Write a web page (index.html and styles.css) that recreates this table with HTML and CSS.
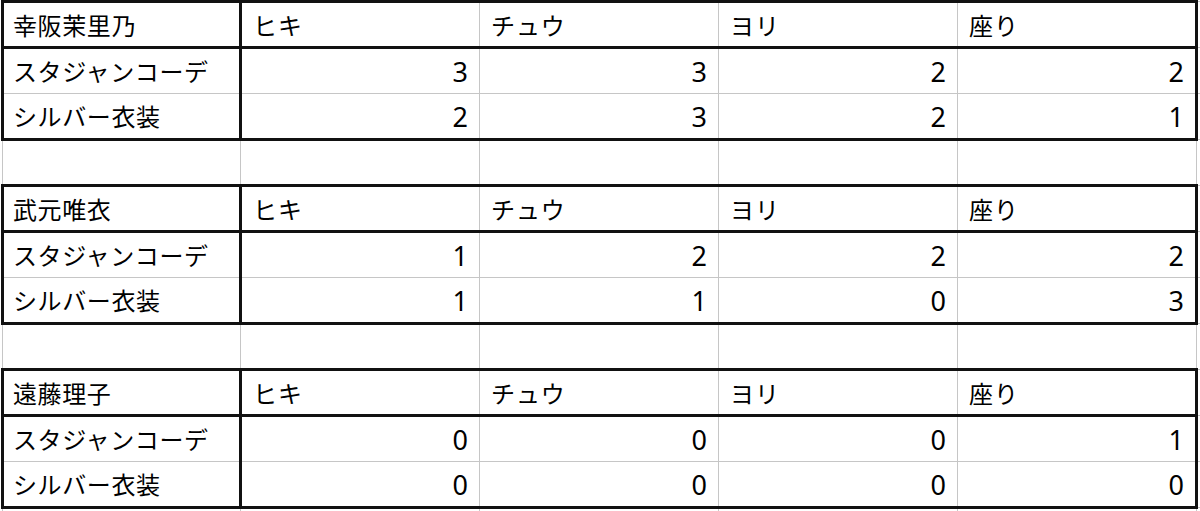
FILE: index.html
```html
<!DOCTYPE html>
<html lang="ja">
<head>
<meta charset="utf-8">
<link rel="stylesheet" href="styles.css">
</head>
<body>
<table class="sheet">
  <colgroup>
    <col class="c-name"><col class="c-val"><col class="c-val"><col class="c-val"><col class="c-val"><col class="c-extra">
  </colgroup>
  <tbody>
    <tr class="head">
      <td class="name tl">幸阪茉里乃</td><td class="h">ヒキ</td><td class="h">チュウ</td><td class="h">ヨリ</td><td class="h tr">座り</td><td class="x"></td>
    </tr>
    <tr>
      <td class="name l">スタジャンコーデ</td><td class="n">3</td><td class="n">3</td><td class="n">2</td><td class="n r">2</td><td class="x"></td>
    </tr>
    <tr class="last">
      <td class="name l">シルバー衣装</td><td class="n">2</td><td class="n">3</td><td class="n">2</td><td class="n r">1</td><td class="x"></td>
    </tr>
    <tr class="blank"><td></td><td></td><td></td><td></td><td></td><td class="x"></td></tr>
    <tr class="head">
      <td class="name tl">武元唯衣</td><td class="h">ヒキ</td><td class="h">チュウ</td><td class="h">ヨリ</td><td class="h tr">座り</td><td class="x"></td>
    </tr>
    <tr>
      <td class="name l">スタジャンコーデ</td><td class="n">1</td><td class="n">2</td><td class="n">2</td><td class="n r">2</td><td class="x"></td>
    </tr>
    <tr class="last">
      <td class="name l">シルバー衣装</td><td class="n">1</td><td class="n">1</td><td class="n">0</td><td class="n r">3</td><td class="x"></td>
    </tr>
    <tr class="blank"><td></td><td></td><td></td><td></td><td></td><td class="x"></td></tr>
    <tr class="head">
      <td class="name tl">遠藤理子</td><td class="h">ヒキ</td><td class="h">チュウ</td><td class="h">ヨリ</td><td class="h tr">座り</td><td class="x"></td>
    </tr>
    <tr>
      <td class="name l">スタジャンコーデ</td><td class="n">0</td><td class="n">0</td><td class="n">0</td><td class="n r">1</td><td class="x"></td>
    </tr>
    <tr class="last">
      <td class="name l">シルバー衣装</td><td class="n">0</td><td class="n">0</td><td class="n">0</td><td class="n r">0</td><td class="x"></td>
    </tr>
    <tr class="blank"><td></td><td></td><td></td><td></td><td></td><td class="x"></td></tr>
  </tbody>
</table>
</body>
</html>
```
FILE: styles.css
```css
html, body {
  margin: 0;
  padding: 0;
  background: #ffffff;
  overflow: hidden;
}
body {
  width: 1200px;
  height: 511px;
}
.sheet {
  border-collapse: collapse;
  table-layout: fixed;
  width: 1300px;
  margin-left: 1px;
  margin-top: 0;
  font-family: "Noto Sans CJK JP", "Noto Sans", sans-serif;
  font-size: 24px;
  font-weight: 400;
  color: #000000;
}
.c-name { width: 238px; }
.c-val { width: 239px; }
.c-extra { width: 106px; }
.sheet tr { height: 46px; }
.sheet td {
  border: 1px solid #c6c6c6;
  padding: 0 10px;
  vertical-align: middle;
  white-space: nowrap;
  overflow: hidden;
  line-height: 1;
}
.sheet td.name {
  padding-left: 9px;
  letter-spacing: 0.6px;
  border-left: 3px solid #111;
  border-right: 3px solid #111;
}
.sheet td.n {
  text-align: right;
  padding-right: 11px;
  font-size: 27px;
  font-family: "Noto Sans", "Noto Sans CJK JP", sans-serif;
  font-weight: 400;
}
.sheet td.h { text-align: left; padding-left: 11px; letter-spacing: 0.9px; }
.sheet tr.head td { border-top: 3px solid #111; border-bottom: 3px solid #111; }
.sheet tr.head td.x { border-top: 1px solid #c6c6c6; border-bottom: 1px solid #c6c6c6; }
.sheet tr.last td { border-bottom: 3px solid #111; }
.sheet tr.last td.x { border-bottom: 1px solid #c6c6c6; }
.sheet td.r, .sheet td.tr { border-right: 3px solid #111; }
.sheet tr.blank td { border-left: 1px solid #c6c6c6; }
```
